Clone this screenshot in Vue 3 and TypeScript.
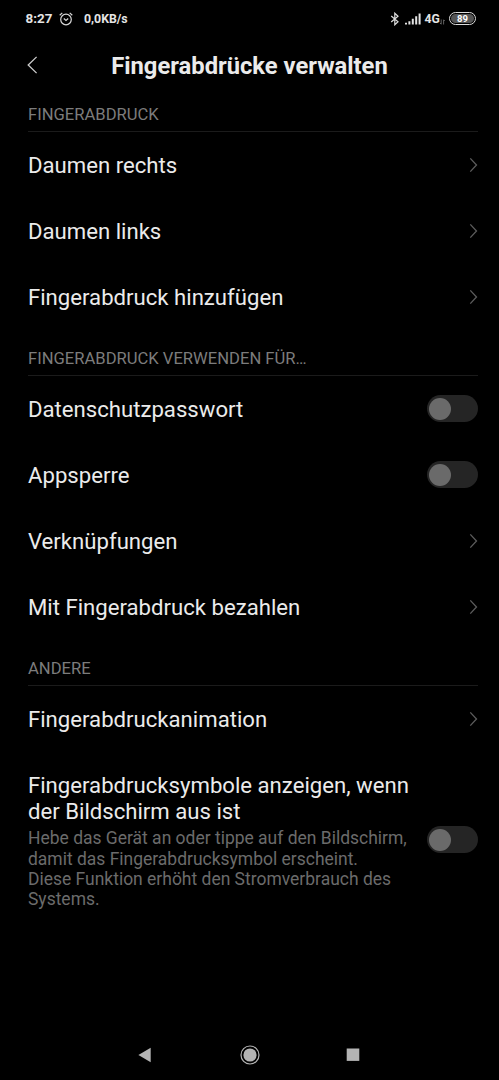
<script setup lang="ts">
interface Row {
  title: string
  kind: 'link' | 'switch'
  summary?: string[]
}
interface Section {
  heading: string
  rows: Row[]
}

const sections: Section[] = [
  {
    heading: 'FINGERABDRUCK',
    rows: [
      { title: 'Daumen rechts', kind: 'link' },
      { title: 'Daumen links', kind: 'link' },
      { title: 'Fingerabdruck hinzufügen', kind: 'link' },
    ],
  },
  {
    heading: 'FINGERABDRUCK VERWENDEN FÜR…',
    rows: [
      { title: 'Datenschutzpasswort', kind: 'switch' },
      { title: 'Appsperre', kind: 'switch' },
      { title: 'Verknüpfungen', kind: 'link' },
      { title: 'Mit Fingerabdruck bezahlen', kind: 'link' },
    ],
  },
  {
    heading: 'ANDERE',
    rows: [
      { title: 'Fingerabdruckanimation', kind: 'link' },
      {
        title: 'Fingerabdrucksymbole anzeigen, wenn der Bildschirm aus ist',
        kind: 'switch',
        summary: [
          'Hebe das Gerät an oder tippe auf den Bildschirm, damit das Fingerabdrucksymbol erscheint.',
          'Diese Funktion erhöht den Stromverbrauch des Systems.',
        ],
      },
    ],
  },
]
</script>

<template>
  <div class="screen">
    <div class="status">
      <span class="clock">8:27</span>
      <svg class="alarm" width="14" height="14" viewBox="0 0 14 14">
        <circle cx="7" cy="7.5" r="5.3" />
        <path d="M4.8 6.5L7 8.5L9.2 6.5M.7 3.2L3.3 .9M13.3 3.2L10.7 .9" />
      </svg>
      <span class="rate">0,0KB/s</span>
      <span class="fill"></span>
      <svg class="bt" width="10" height="14" viewBox="0 0 10 14">
        <path d="M1.2 4L8 9.8L4.8 12.8V1.2L8 4.2L1.2 10" />
      </svg>
      <svg class="signal" width="16" height="12" viewBox="0 0 16 12">
        <path d="M0 9.8h2V11.5H0zM3.4 8.2h2v3.3h-2zM6.8 5.8h2v5.7h-2zM10.2 3.2h2v8.3h-2zM13.6 .6h2v10.9h-2z" />
      </svg>
      <span class="net">4G</span>
      <svg class="traffic" width="5" height="6" viewBox="0 0 5 6">
        <path d="M1.2 .5V5.2M0 4L1.2 5.2M3.6 5.5V.8L4.8 2" />
      </svg>
      <span class="battery"><span class="level">89</span></span>
    </div>

    <header class="bar">
      <svg class="back" width="12" height="18" viewBox="0 0 12 18">
        <path d="M9.6 .9L1.2 9L9.6 17.1" />
      </svg>
      <h1>Fingerabdrücke verwalten</h1>
    </header>

    <main>
      <section v-for="s in sections" :key="s.heading">
        <h2><span>{{ s.heading }}</span></h2>
        <div v-for="r in s.rows" :key="r.title" class="row" :class="{ tall: r.summary }">
          <div class="text">
            <div class="title">{{ r.title }}</div>
            <p v-for="line in r.summary" :key="line">{{ line }}</p>
          </div>
          <svg v-if="r.kind === 'link'" class="chevron" width="9" height="16" viewBox="0 0 9 16">
            <path d="M1.3 1.4L7.5 8L1.3 14.6" />
          </svg>
          <span v-else class="switch"><span class="knob"></span></span>
        </div>
      </section>
    </main>

    <nav>
      <svg width="14" height="16" viewBox="0 0 14 16"><path d="M.4 8L12.7 .8V15.2z" /></svg>
      <svg class="home" width="20" height="20" viewBox="0 0 20 20">
        <circle cx="10" cy="10" r="6.6" />
        <circle class="ring" cx="10" cy="10" r="9" />
      </svg>
      <svg width="14" height="14" viewBox="0 0 14 14"><path d="M.7 .5H13.3V12.9H.7z" /></svg>
    </nav>
  </div>
</template>

<style>
body {
  background: #000;
}
</style>

<style scoped>
.screen {
  box-sizing: border-box;
  width: 499px;
  height: 1080px;
  display: flex;
  flex-direction: column;
  background: #000;
  color: #ebebeb;
  font-family: Roboto, sans-serif;
  overflow: hidden;
}
svg {
  flex: none;
  display: block;
  fill: none;
}
.status {
  height: 38px;
  display: flex;
  align-items: center;
  padding: 0 23px 0 25.5px;
  font-weight: 700;
  color: #e4e4e4;
}
.clock {
  width: 33.5px;
  margin-bottom: 1px;
  font-size: 13.4px;
}
.alarm {
  stroke: #d8d8d8;
  stroke-width: 1.2;
}
.rate {
  margin-left: 11px;
  font-size: 12.3px;
}
.fill {
  flex: 1;
}
.bt {
  stroke: #dcdcdc;
  stroke-width: 1.2;
  margin-right: 5px;
}
.signal path {
  fill: #e4e4e4;
}
.net {
  margin: 0 0 1px 3.5px;
  width: 15.5px;
  font-size: 12.2px;
}
.traffic {
  stroke: #777;
  stroke-width: 0.8;
  margin: 5px 4px 0 0;
}
.battery {
  box-sizing: border-box;
  width: 27px;
  height: 13px;
  margin-bottom: 1px;
  padding: 1px;
  border: 1px solid #dcdcdc;
  border-radius: 7px;
  display: flex;
}
.level {
  flex: 1;
  border-radius: 5px;
  background: #555;
  color: #fff;
  font-size: 9.5px;
  line-height: 9px;
  text-align: center;
}
.bar {
  height: 48px;
  display: grid;
  grid-template-columns: 60px 1fr 60px;
  align-items: center;
  padding-top: 6px;
  box-sizing: border-box;
}
.back {
  margin-left: 27px;
  stroke: #ccc;
  stroke-width: 1.3;
}
h1 {
  margin: 2px 0 0;
  text-align: center;
  font-size: 23.75px;
  line-height: 30px;
  font-weight: 700;
  white-space: nowrap;
}
main {
  flex: 1;
  padding: 0 21px 0 28px;
}
h2 {
  box-sizing: border-box;
  height: 46px;
  margin: 0;
  padding-top: 19px;
  border-bottom: 1px solid #1b1b1b;
  color: #7c7c7c;
  font-size: 16.6px;
  line-height: 20px;
  font-weight: 400;
}
.row {
  height: 66px;
  display: flex;
  align-items: center;
  justify-content: space-between;
}
.title {
  font-size: 22.15px;
  line-height: 26px;
}
.tall {
  height: 174px;
}
.tall .text {
  width: 386px;
  padding-top: 4px;
}
p {
  margin: 0;
  color: #6b6b6b;
  font-size: 17.48px;
  line-height: 20.4px;
}
.title + p {
  margin-top: 4px;
}
.chevron {
  stroke: #5c5c5c;
  stroke-width: 1.3;
}
.switch {
  flex: none;
  box-sizing: border-box;
  width: 51px;
  height: 27px;
  margin-bottom: 1px;
  padding: 2.5px 2px;
  border-radius: 14px;
  background: #252525;
}
.tall .switch {
  margin: 1px 0 0;
}
.knob {
  display: block;
  width: 22px;
  height: 22px;
  border-radius: 50%;
  background: #6a6a6a;
}
nav {
  height: 51px;
  display: flex;
  align-items: center;
  justify-content: space-between;
  padding: 0 139px 0 138px;
}
nav svg {
  fill: #b4b4b4;
}
.home {
  margin-left: 1px;
}
nav .ring {
  fill: none;
  stroke: #b4b4b4;
  stroke-width: 1.2;
}
</style>
